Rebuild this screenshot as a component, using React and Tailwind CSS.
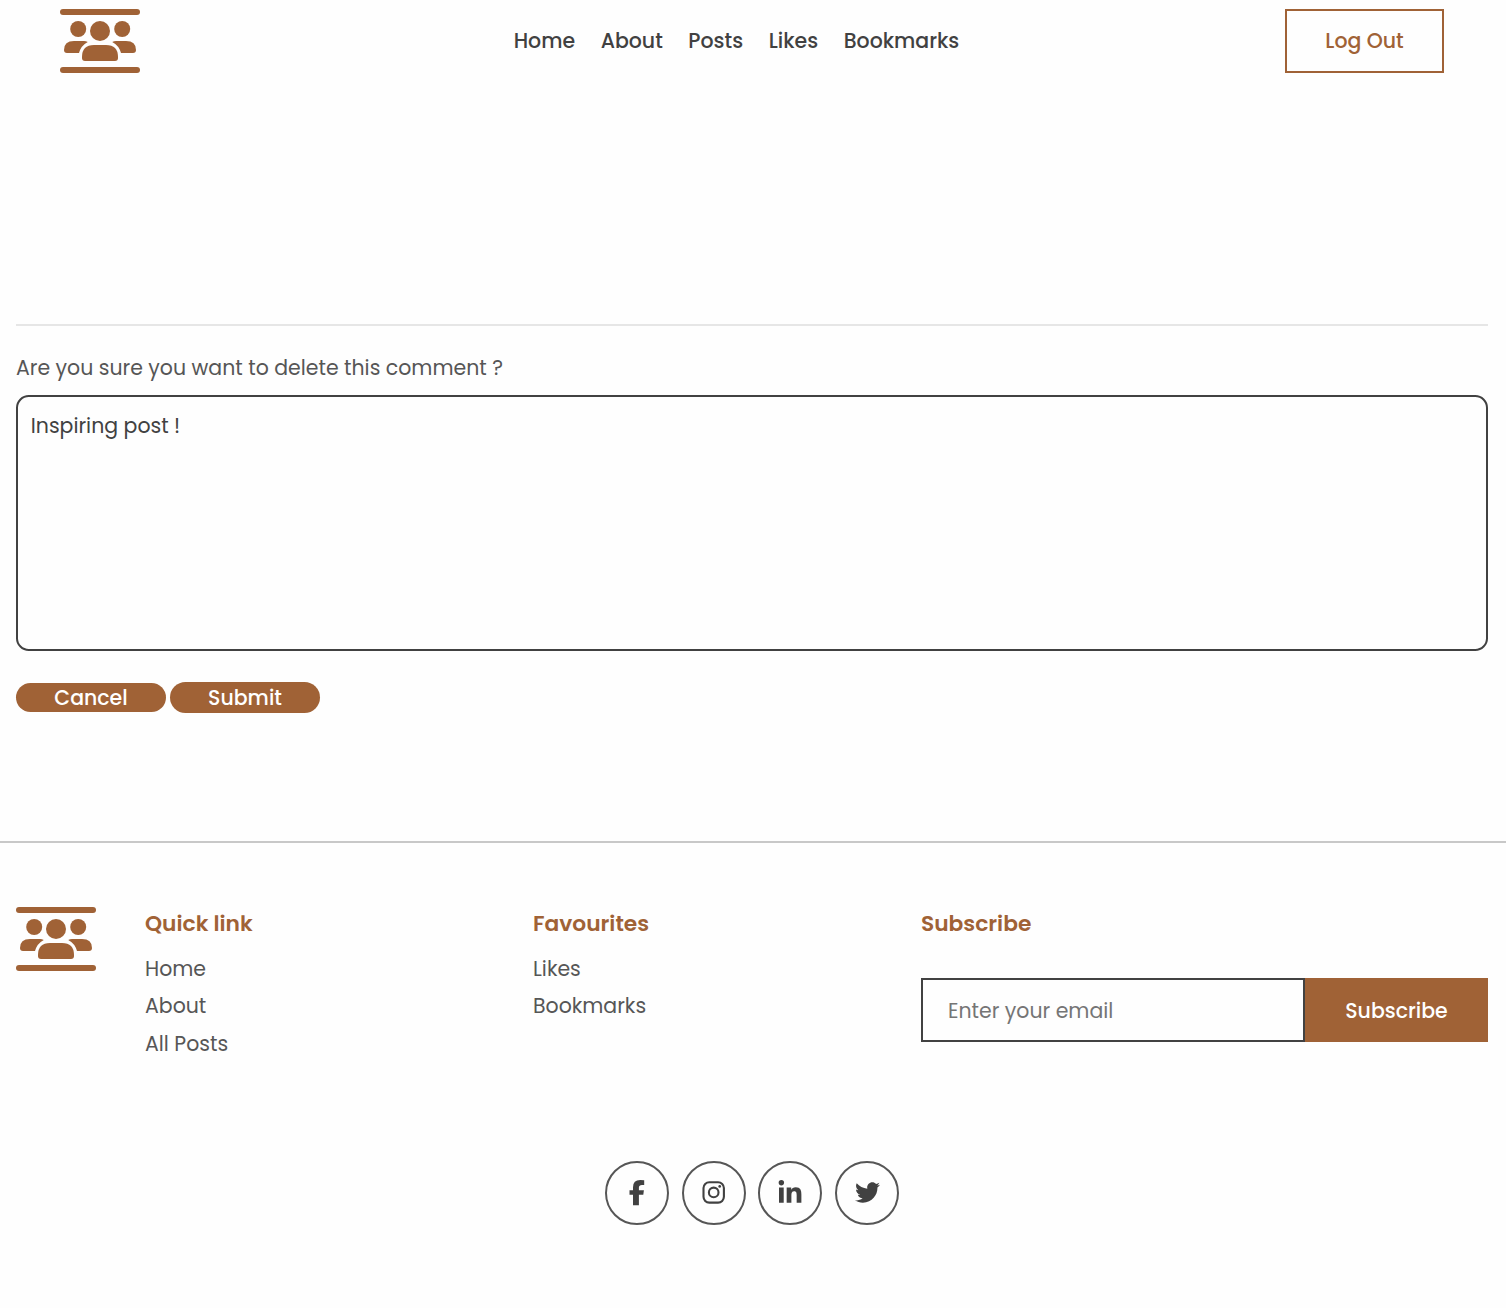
import React from "react";
import { FaLinkedinIn, FaTwitter } from "react-icons/fa";

function Logo() {
  return (
    <svg width="80" height="64" viewBox="0 0 80 64" fill="#a06236" className="block shrink-0">
      <rect x="0" y="0" width="80" height="6" rx="3" />
      <rect x="0" y="58" width="80" height="6" rx="3" />
      <circle cx="18.2" cy="20" r="8" />
      <circle cx="62.2" cy="20" r="8" />
      <circle cx="40" cy="22" r="10" />
      <path d="M14 32h10q2 0 3.800.9q-6.800 3.500-8.800 11.100h-12q-3 0-3-3q0-9 10-9z" />
      <path d="M66 32h-10q-2 0-3.800.9q6.800 3.500 8.800 11.100h12q3 0 3-3q0-9-10-9z" />
      <path d="M34 36h12q12 0 12 12v1q0 3-3 3h-30q-3 0-3-3v-1q0-12 12-12z" />
    </svg>
  );
}

function FacebookIcon() {
  return (
    <svg width="16" height="26" viewBox="0 0 16 26" fill="currentColor">
      <path d="M4 25.200V14.700H.5v-4.400H4V7.200Q4 0 11.200 0q2.200 0 4 .3v4.600h-2.200Q9.900 4.900 9.900 7.500v2.800h5L14.300 14.700H9.900v10.500z" />
    </svg>
  );
}

function InstagramIcon() {
  return (
    <svg width="24" height="24" viewBox="0 0 24 24" fill="none" stroke="currentColor" strokeWidth="2.1">
      <rect x="1.500" y="2.200" width="20.400" height="20.400" rx="5.800" />
      <circle cx="11.700" cy="12.400" r="4.800" />
      <circle cx="17.700" cy="6.400" r="1.350" fill="currentColor" stroke="none" />
    </svg>
  );
}

const navLinks = ["Home", "About", "Posts", "Likes", "Bookmarks"];

const circle =
  "flex size-16 items-center justify-center rounded-full border-2 border-[#565656] text-[#414141]";

const heading = "mt-[2px] text-[21.760px] font-semibold text-[#a06236]";

export default function App() {
  return (
    <div className="flex h-[1308px] w-full flex-col bg-[#fefefe] font-['Poppins','Inter',sans-serif] text-[20.480px] leading-[30px] text-[#565656]">
      <header className="mt-[9px] flex h-16 items-center justify-between pr-[62px] pl-[60px]">
        <Logo />
        <nav className="ml-[48px] flex gap-[25.600px] font-medium text-[#414141]">
          {navLinks.map((label) => (
            <a key={label} href="#" className="whitespace-nowrap">
              {label}
            </a>
          ))}
        </nav>
        <button className="h-16 w-[159px] border-2 border-[#a06236] font-medium text-[#a06236]">
          Log Out
        </button>
      </header>

      <main className="mt-[251px] flex h-[517px] flex-col pr-[18px] pl-4">
        <hr className="border-0 border-t-2 border-[#e6e6e6]" />
        <label htmlFor="comment" className="mt-[27px]">
          Are you sure you want to delete this comment ?
        </label>
        <textarea
          id="comment"
          defaultValue="Inspiring post !"
          className="mt-3 block h-64 w-full resize-none rounded-[12.800px] border-2 border-[#414141] px-[12.800px] py-[14px] text-[#414141]"
        />
        <div className="mt-[31px] flex items-center gap-1 font-medium text-white">
          <button className="h-[29px] w-[150px] rounded-full bg-[#a06236] leading-[29px]">Cancel</button>
          <button className="h-[31px] w-[150px] rounded-full bg-[#a06236] leading-[31px]">Submit</button>
        </div>
      </main>

      <footer className="flex flex-col border-t-2 border-[#c8c8c8] pr-[18px] pl-4">
        <div className="mt-16 grid h-[190px] grid-cols-[129px_388px_388px_567px]">
          <Logo />
          <div>
            <h3 className={heading}>Quick link</h3>
            <ul className="mt-[10.500px] leading-[37.500px]">
              <li>Home</li>
              <li>About</li>
              <li>All Posts</li>
            </ul>
          </div>
          <div>
            <h3 className={heading}>Favourites</h3>
            <ul className="mt-[10.500px] leading-[37.500px]">
              <li>Likes</li>
              <li>Bookmarks</li>
            </ul>
          </div>
          <div>
            <h3 className={heading}>Subscribe</h3>
            <form className="mt-[39px] flex h-16">
              <input
                type="email"
                placeholder="Enter your email"
                className="h-16 w-96 border-2 border-[#414141] px-[25px] placeholder:text-[#757575]"
              />
              <button type="button" className="flex-1 bg-[#a06236] pt-0.5 font-medium text-white">
                Subscribe
              </button>
            </form>
          </div>
        </div>
        <div className="mt-16 flex justify-center gap-[12.700px]">
          <a href="#" aria-label="Facebook" className={circle}><FacebookIcon /></a>
          <a href="#" aria-label="Instagram" className={`${circle} pb-0.5`}><InstagramIcon /></a>
          <a href="#" aria-label="LinkedIn" className={circle}><FaLinkedinIn size={26} /></a>
          <a href="#" aria-label="Twitter" className={`${circle} pb-0.5`}><FaTwitter size={25} /></a>
        </div>
      </footer>
    </div>
  );
}
